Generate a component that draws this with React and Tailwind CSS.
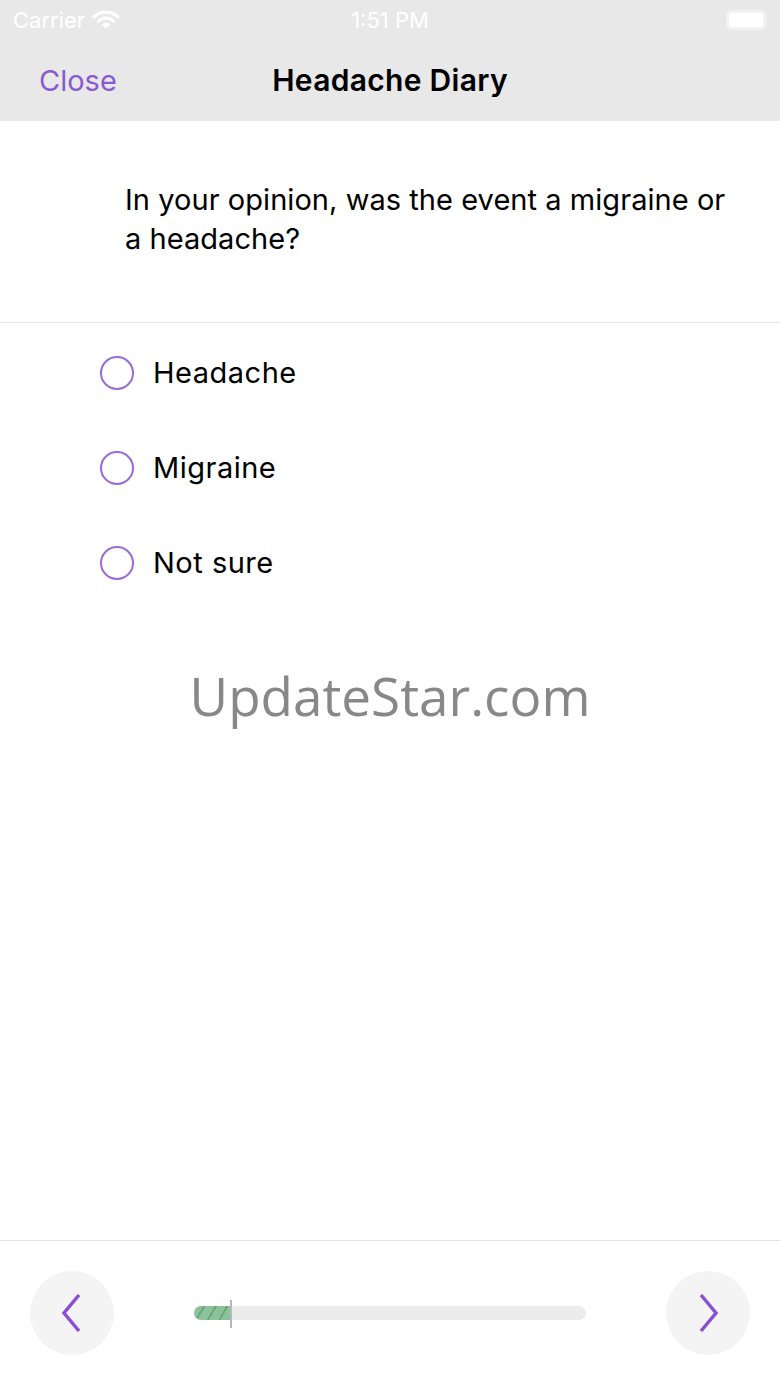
import React from "react";

function Radio({ label }) {
  return (
    <div className="flex items-center h-[95px]">
      <div className="ml-[100px] w-[34px] h-[34px] rounded-full border-2 border-[#9a6ad8]" />
      <span className="ml-[19px] text-[29px] text-black tracking-[0.5px]">{label}</span>
    </div>
  );
}

export default function App() {
  return (
    <div
      className="w-[780px] h-[1387px] bg-white flex flex-col overflow-hidden"
      style={{ fontFamily: "Inter, 'Liberation Sans', sans-serif" }}
    >
      {/* status bar */}
      <div className="h-[40px] bg-[#e8e8e8] flex items-center px-[13px] text-white text-[22px] relative">
        <div className="flex items-center gap-[7px]">
          <span>Carrier</span>
          <svg width="28" height="22" viewBox="0 0 26 20">
            <path d="M2 7 A16 16 0 0 1 24 7" stroke="white" strokeWidth="3" fill="none" strokeLinecap="round" />
            <path d="M6 11 A10 10 0 0 1 20 11" stroke="white" strokeWidth="3" fill="none" strokeLinecap="round" />
            <path d="M13 18 L9 14 A6 6 0 0 1 17 14 Z" fill="white" />
          </svg>
        </div>
        <span className="absolute left-1/2 -translate-x-1/2">1:51 PM</span>
        <div className="ml-auto mr-[1px] w-[40px] h-[20px] rounded-[6px] bg-[#f2f2f2] p-[3px]">
          <div className="w-full h-full bg-white rounded-[3px]" />
        </div>
      </div>
      {/* nav bar */}
      <div className="h-[81px] bg-[#e8e8e8] flex items-center relative">
        <span className="ml-[39px] text-[29px] text-[#8a5ad0]">Close</span>
        <span className="absolute left-1/2 -translate-x-1/2 text-[30px] tracking-[0.3px] font-semibold text-black whitespace-nowrap">
          Headache Diary
        </span>
      </div>
      {/* question */}
      <div className="h-[202px] border-b border-[#e6e6e6] pl-[125px] pr-[45px] pt-[59px]">
        <p className="text-[29px] leading-[39px] tracking-[0.05px] text-black">
          In your opinion, was the event a migraine or a headache?
        </p>
      </div>
      <div className="pt-[2px]">
        <Radio label="Headache" />
        <Radio label="Migraine" />
        <Radio label="Not sure" />
      </div>
      <div className="flex justify-center mt-[46px]">
        <span
          className="text-[53px] text-[#888888]"
          style={{ fontFamily: "'Open Sans', 'Noto Sans', sans-serif" }}
        >
          UpdateStar.com
        </span>
      </div>
      <div className="flex-1" />
      {/* bottom bar */}
      <div className="h-[147px] border-t border-[#e2e2e2] flex items-center px-[30px] pb-[2px]">
        <div className="w-[84px] h-[84px] rounded-full bg-[#f4f4f4] flex items-center justify-center">
          <svg width="26" height="40" viewBox="0 0 26 40">
            <path d="M20 2 L5 20 L20 38" stroke="#8a4fd6" strokeWidth="3.5" fill="none" />
          </svg>
        </div>
        <div className="flex-1 flex justify-center">
          <div className="relative w-[392px] h-[14px] rounded-full bg-[#ececec]">
            <div
              className="absolute left-0 top-0 h-full w-[36px] rounded-l-full bg-[#8ac299]"
              style={{
                backgroundImage:
                  "repeating-linear-gradient(120deg, transparent 0 8px, #6fa57e 8px 10px)",
              }}
            />
            <div className="absolute left-[36px] top-[-6px] w-[2px] h-[28px] bg-[#b8b8b8]" />
          </div>
        </div>
        <div className="w-[84px] h-[84px] rounded-full bg-[#f4f4f4] flex items-center justify-center">
          <svg width="26" height="40" viewBox="0 0 26 40">
            <path d="M6 2 L21 20 L6 38" stroke="#8a4fd6" strokeWidth="3.5" fill="none" />
          </svg>
        </div>
      </div>
    </div>
  );
}
